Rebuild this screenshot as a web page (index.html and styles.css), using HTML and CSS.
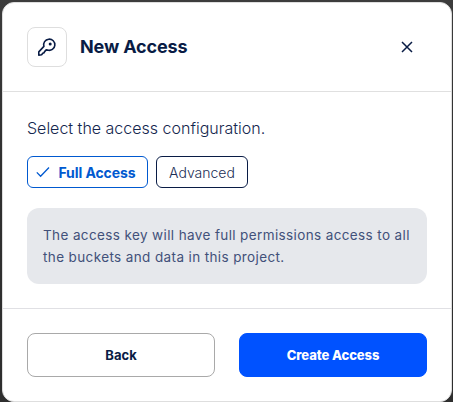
FILE: index.html
```html
<!DOCTYPE html>
<html lang="en">
<head>
<meta charset="utf-8">
<title>New Access</title>
<link rel="stylesheet" href="styles.css">
</head>
<body>
<main class="dialog">
  <header class="header">
    <div class="icon-tile">
      <svg width="20" height="20" viewBox="0 0 20 20" fill="none" stroke="currentColor" stroke-width="1.6" stroke-linejoin="round">
        <path d="M6.9 9.4A5.6 5.6 0 1 1 10.6 13.1L9.2 12.9L7.6 14.6L7 15.8L5.8 16.3L4.6 17.8L1.8 18.1L1.8 14.9Z"/>
        <circle cx="13.2" cy="6.9" r="1.5" fill="currentColor" stroke="none"/>
      </svg>
    </div>
    <h1 class="title">New Access</h1>
    <button class="close" aria-label="Close">
      <svg width="12" height="12" viewBox="0 0 12 12" stroke="currentColor" stroke-width="1.5"><path d="M1 1L11 11M11 1L1 11"/></svg>
    </button>
  </header>
  <section class="body">
    <p class="prompt">Select the access configuration.</p>
    <div class="chips">
      <button class="chip chip-selected">
        <svg width="14" height="12" viewBox="0 0 14 12" fill="none" stroke="currentColor" stroke-width="1.3"><path d="M.8 6.4L4.6 10.2L13 1.5"/></svg>
        <span>Full Access</span>
      </button>
      <button class="chip">Advanced</button>
    </div>
    <p class="note">The access key will have full permissions access to all the buckets and data in this project.</p>
  </section>
  <footer class="footer">
    <button class="btn btn-outline">Back</button>
    <button class="btn btn-primary">Create Access</button>
  </footer>
</main>
</body>
</html>
```
FILE: styles.css
```css
* { box-sizing: border-box; }

body {
  margin: 0;
  padding: 2px 1px 0 2px;
  height: 402px;
  overflow: hidden;
  background: linear-gradient(#3c3c3c, #303030 40%, #2e2e2e);
  font-family: Inter, "Liberation Sans", sans-serif;
  color: #091c45;
}

button {
  font: inherit;
  color: inherit;
  background: none;
  padding: 0;
}

.dialog {
  height: 400px;
  background: #fff;
  border: 1px solid #dedede;
  border-radius: 12px;
}

.header {
  display: flex;
  align-items: center;
  height: 89px;
  padding: 0 38px 0 24px;
  border-bottom: 1px solid #e0e0e0;
}

.icon-tile {
  display: grid;
  place-items: center;
  width: 40px;
  height: 40px;
  border: 1px solid #dedede;
  border-radius: 8px;
}

.title {
  margin: 0 auto 0 13px;
  font-size: 18px;
  line-height: 24px;
  font-weight: 700;
  letter-spacing: -0.15px;
}

.close {
  display: grid;
  border: 0;
}

.body { padding: 24px; }

.prompt {
  margin: 0 0 16px;
  font-size: 16px;
  line-height: 24px;
  font-weight: 300;
  color: #14264e;
}

.chips {
  display: flex;
  gap: 8px;
  margin-bottom: 20px;
}

.chip {
  display: flex;
  align-items: center;
  justify-content: center;
  gap: 8px;
  width: 92px;
  height: 32px;
  border: 1px solid #091c45;
  border-radius: 6px;
  font-size: 14px;
  font-weight: 300;
  color: #1c2e55;
}

.chip-selected {
  width: 121px;
  padding-right: 3px;
  border-color: #0059d0;
  color: #0059d0;
  font-weight: 700;
  letter-spacing: -0.08px;
}

.note {
  margin: 0;
  padding: 16px;
  border-radius: 12px;
  background: #e6e8ec;
  color: #42517a;
  font-size: 13.5px;
  line-height: 22px;
  letter-spacing: 0.38px;
}

.footer {
  display: flex;
  gap: 24px;
  padding: 24px;
  border-top: 1px solid #e0e0e4;
}

.btn {
  flex: 1;
  height: 44px;
  border: 1px solid #a9a9a9;
  border-radius: 8px;
  font-size: 13px;
  font-weight: 700;
}

.btn-primary {
  border-color: #0052ff;
  background: #0052ff;
  color: #fff;
  font-weight: 800;
  letter-spacing: -0.07px;
}
```
